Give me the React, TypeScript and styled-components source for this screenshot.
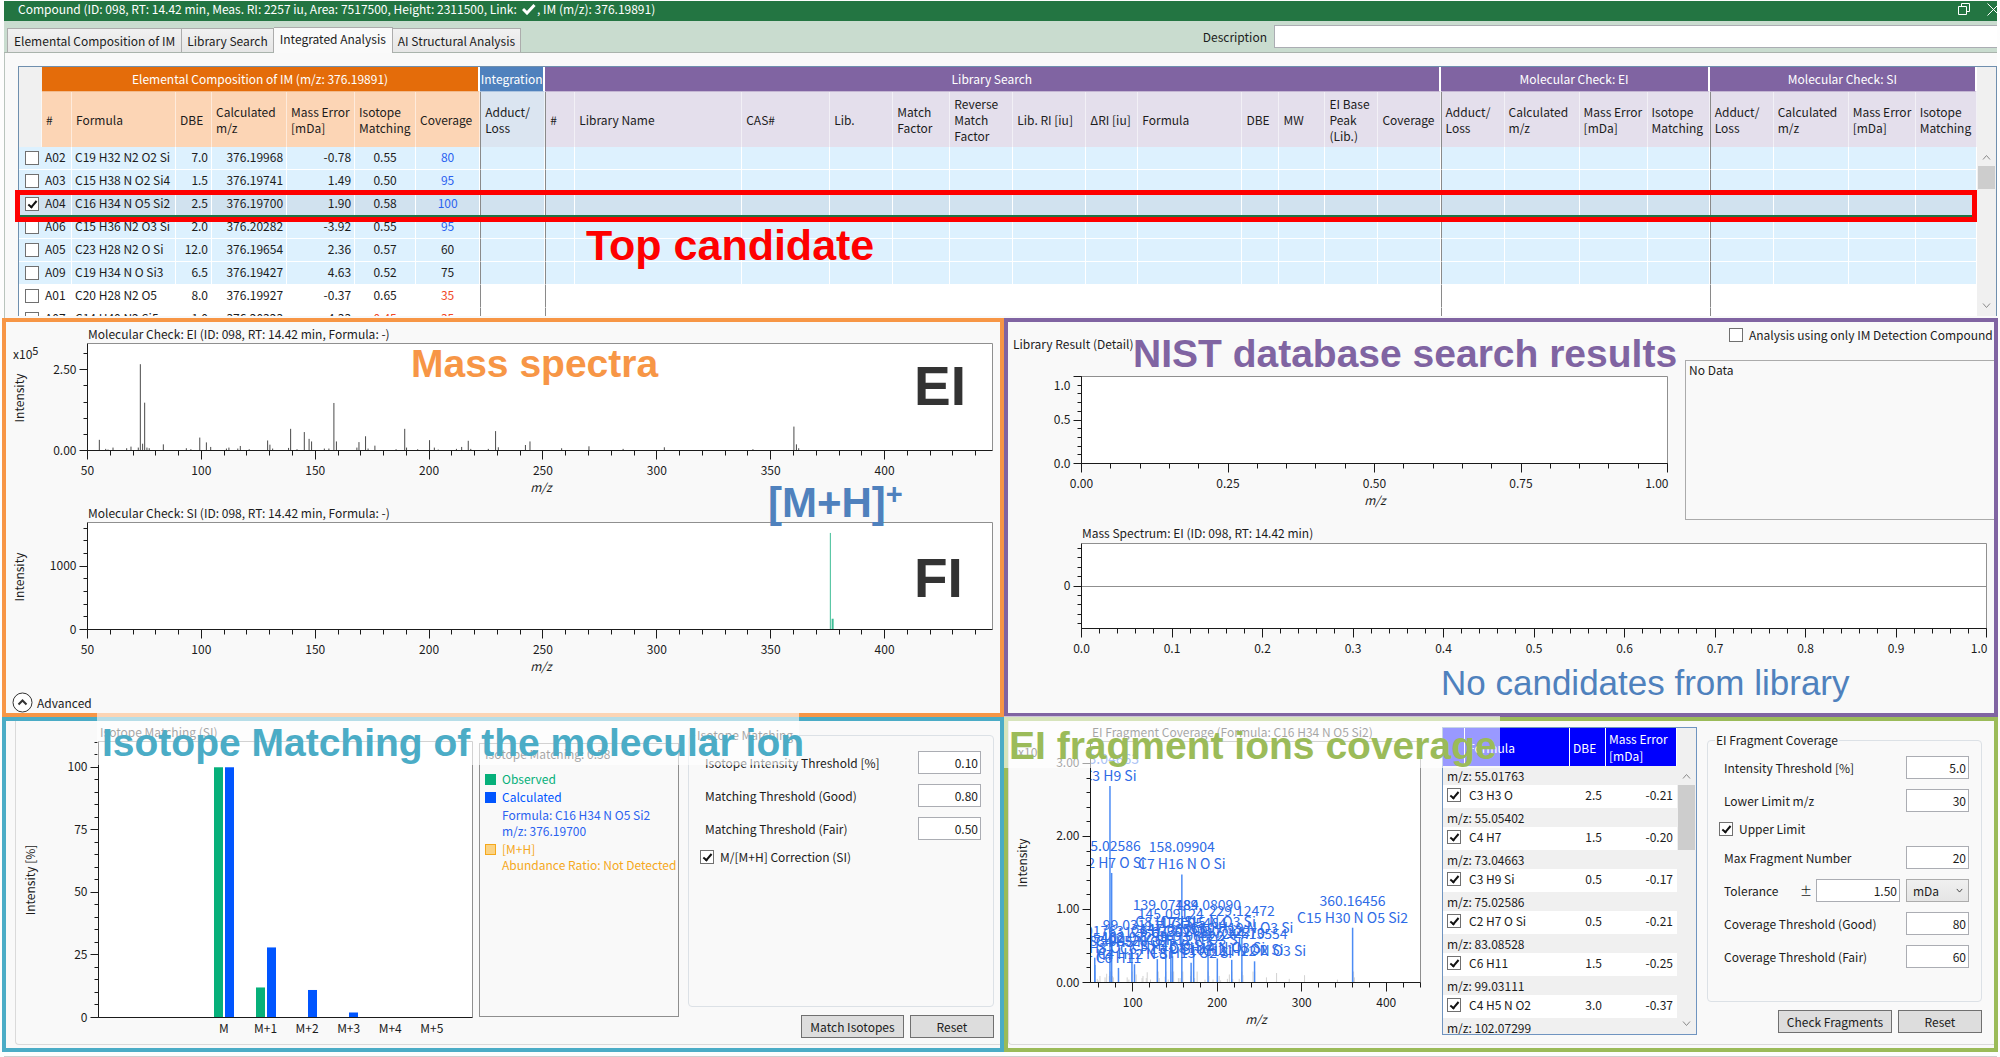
import React from 'react';
import styled, { createGlobalStyle, css } from 'styled-components';

const UI_FONT = '"Noto Sans CJK JP", "Noto Sans", sans-serif';
const NOTE_FONT = '"Liberation Sans", Arial, sans-serif';

const GlobalStyle = createGlobalStyle`
  *, *::before, *::after { box-sizing: border-box; }
  body { margin: 0; background: #fdfdfd; color: #1c1c1c; font: 12px/16px ${UI_FONT}; }
  button, input, select { font: inherit; color: inherit; margin: 0; }
`;

/* ---------- window chrome ---------- */

const Window = styled.div`
  padding: 1px 3px 0 4px;
`;

const TitleBar = styled.header`
  display: flex;
  align-items: center;
  height: 20px;
  padding: 0 0 4px 14px;
  background: #237542;
  color: #fff;
  overflow: hidden;
`;

const TitleText = styled.h1`
  display: flex;
  align-items: center;
  margin: 0 auto 0 0;
  font: inherit;
  white-space: pre;
  svg { margin: 0 1px 0 5px; }
`;

const CaptionButton = styled.button`
  display: grid;
  place-items: center;
  width: 30px;
  height: 16px;
  padding: 0;
  border: 0;
  background: none;
  color: #fff;
  &:last-child { width: 18px; justify-content: end; }
`;

const TabStrip = styled.div`
  display: flex;
  align-items: flex-end;
  height: 32px;
  padding-left: 3px;
  background: #c9dccf;
  border-bottom: 1px solid #a9b3ac;
`;

const TabList = styled.div`
  display: flex;
  align-items: flex-end;
`;

const Tab = styled.button<{ $active?: boolean }>`
  height: 24px;
  padding: 0 5px;
  border: 1px solid #acacac;
  border-left-width: 0;
  border-bottom: 0;
  background: linear-gradient(#f1f1f1, #e6e6e6);
  white-space: nowrap;
  &:first-child { padding: 0 6px; border-left-width: 1px; }
  ${p => p.$active && css`
    height: 26px;
    padding: 0 6px 4px;
    margin-bottom: -1px;
    background: #fafafa;
  `}
`;

const Description = styled.label`
  display: flex;
  align-items: center;
  gap: 7px;
  margin: 0 0 4px auto;
`;

const DescriptionInput = styled.input`
  width: calc(36vw + 3px);
  height: 23px;
  border: 1px solid #abadb3;
  border-right: 0;
  background: #fff;
`;

/* ---------- candidate grid ---------- */

const GridArea = styled.section`
  padding: 13px 0 2px 13px;
  border-left: 1px solid #b9c4bd;
  background: #f9f9f9;
`;

const GridWrap = styled.div`
  position: relative;
`;

const GridClip = styled.div`
  display: flex;
  height: 250px;
  overflow: hidden;
  border: solid #6f8fae;
  border-width: 1px 1px 0 1px;
  background: #fff;
`;

const CandidateTable = styled.table`
  flex: 1;
  width: 100%;
  height: max-content;
  table-layout: fixed;
  border-collapse: separate;
  border-spacing: 0;
`;

const tones = {
  none: ['#f0f0f0', '#f0f0f0'],
  orange: ['#e46c0a', '#fcd5b5'],
  blue: ['#4f81bd', '#dbe5f1'],
  purple: ['#8064a2', '#e4dfec'],
} as const;
type Tone = keyof typeof tones;

const GroupTh = styled.th<{ $tone: Tone }>`
  height: 25px;
  padding: 0;
  border-right: 2px solid #fff;
  border-bottom: 1px solid #fff8;
  background: ${p => tones[p.$tone][0]};
  color: #fff;
  font-weight: 400;
  white-space: nowrap;
  ${p => p.$tone === 'none' && css`border-color: #f0f0f0; border-right-width: 0;`}
`;

const ColumnTh = styled.th<{ $tone: Tone; $first?: boolean }>`
  height: 55px;
  padding: 0 0 0 4px;
  border-right: 1px solid #fff8;
  background: ${p => tones[p.$tone][1]};
  font-weight: 400;
  text-align: left;
  line-height: 16px;
  white-space: pre;
  ${p => p.$first && css`border-left: 1px solid #8a8a8a;`}
`;

const Row = styled.tr<{ $state: string }>`
  background: ${p => (p.$state === 'selected' ? '#d1e2ef' : p.$state === 'hit' ? '#ddf1fe' : '#fff')};
`;

const Cell = styled.td<{ $align?: string; $first?: boolean; $color?: string }>`
  height: 23px;
  padding: 0 3px 2px;
  border: solid #fff;
  border-width: 0 1px 1px 0;
  text-align: ${p => p.$align || 'left'};
  color: ${p => p.$color || 'inherit'};
  line-height: 20px;
  white-space: nowrap;
  ${p => p.$first && css`border-left: 1px solid #8a8a8a;`}
`;

const CheckBox = styled.input.attrs({ type: 'checkbox' })`
  appearance: none;
  position: relative;
  display: block;
  flex: none;
  width: 14px;
  height: 14px;
  border: 1px solid #707070;
  background: #fff;
  &:checked::after {
    content: '';
    position: absolute;
    left: 4px;
    top: 1px;
    width: 5px;
    height: 9px;
    border: solid #111;
    border-width: 0 2px 2px 0;
    transform: rotate(40deg);
  }
`;

const CheckCell = styled(Cell)`
  padding: 0 0 0 6px;
  border-right: 0;
`;

const ScrollBar = styled.div<{ $top: number }>`
  display: flex;
  flex-direction: column;
  align-items: stretch;
  flex: none;
  width: 19px;
  padding: ${p => p.$top}px 1px 2px;
  background: #f0f0f0;
`;

const ScrollButton = styled.button`
  display: grid;
  place-items: center;
  height: 17px;
  padding: 0;
  border: 0;
  background: none;
  color: #8a8a8a;
`;

const ScrollThumb = styled.div<{ $h: number }>`
  height: ${p => p.$h}px;
  margin-bottom: auto;
  background: #cdcdcd;
`;

/* ---------- annotations drawn over the window ---------- */

const TopBox = styled.div`
  position: absolute;
  left: -3px;
  right: 20px;
  top: 124px;
  height: 32px;
  border: 5px solid #fe0000;
  box-shadow: inset 0 -2px 0 #217346;
  pointer-events: none;
`;

const Note = styled.div<{ $x: number; $y: number; $size: number; $color: string; $plain?: boolean }>`
  position: absolute;
  left: ${p => p.$x}px;
  top: ${p => p.$y}px;
  color: ${p => p.$color};
  font: ${p => (p.$plain ? 400 : 700)} ${p => p.$size}px/1 ${NOTE_FONT};
  white-space: nowrap;
  pointer-events: none;
  sup { font-size: 29px; line-height: 0; vertical-align: 13px; }
`;

const Banner = styled(Note)<{ $w: number }>`
  width: ${p => p.$w}px;
  height: 52px;
  padding: 10px 0 0 5px;
  background: #fff9;
`;

/* ---------- panels ---------- */

const Panels = styled.main`
  display: grid;
  grid-template-columns: 1002fr 994fr;
  grid-template-rows: 399px 335px;
  padding: 0 2px;
  height: 737px;
`;

const Panel = styled.section<{ $color: string }>`
  position: relative;
  min-width: 0;
  border: 4px solid ${p => p.$color};
  background: #f9f9f9;
`;

const ColumnPanel = styled(Panel)`
  display: flex;
  flex-direction: column;
`;

const Chart = styled.svg`
  display: block;
  width: 100%;
  height: auto;
  font: 12px ${UI_FONT};
  fill: #1c1c1c;
`;

const Expander = styled.button`
  display: flex;
  align-items: center;
  gap: 4px;
  margin: auto auto 0 6px;
  padding: 0;
  border: 0;
  background: none;
`;

const LibraryTop = styled.div`
  display: grid;
  grid-template-columns: minmax(0, 677fr) minmax(0, 309fr);
`;

const LibraryTitle = styled.h2`
  margin: 14px 0 0 5px;
  font: inherit;
  line-height: 16px;
`;

const CheckLabel = styled.label`
  display: flex;
  align-items: center;
  gap: 6px;
  height: 14px;
  white-space: nowrap;
`;

const OnlyImLabel = styled(CheckLabel)`
  margin: 6px 0 18px 44px;
`;

const NoData = styled.div`
  height: 160px;
  padding: 1px 3px;
  border: 1px solid #ababab;
  border-right: 0;
`;

const Frame = styled.div<{ $inset: number; $cols: string }>`
  display: grid;
  grid-template-columns: ${p => p.$cols};
  height: 324px;
  margin-left: ${p => p.$inset}px;
  border: solid #dadada;
  border-width: 0 0 1px 1px;
  border-radius: 0 0 0 4px;
`;

const LegendBox = styled.div`
  margin: 22px 0 27px;
  padding: 2px 0 0 5px;
  border: 1px solid #8f8f8f;
  overflow: hidden;
  white-space: nowrap;
`;

const LegendItem = styled.div<{ $color?: string; $gap?: number }>`
  display: grid;
  grid-template-columns: 11px auto;
  column-gap: 6px;
  align-items: center;
  margin-top: ${p => p.$gap || 0}px;
  color: ${p => p.$color};
  span:last-child { grid-column: 2; }
`;

const Swatch = styled.span<{ $fill: string }>`
  width: 11px;
  height: 11px;
  border: 1px solid currentColor;
  background: ${p => p.$fill};
`;

const Settings = styled.form<{ $top: number; $bottom: number; $side: string }>`
  display: flex;
  flex-direction: column;
  min-width: 0;
  margin: ${p => p.$side};
  padding: ${p => p.$top}px 0 ${p => p.$bottom}px;
`;

const Group = styled.fieldset`
  flex: 1;
  min-width: 0;
  margin: 0 0 8px;
  padding: 9px 12px 0 11px;
  border: 1px solid #dce1e6;
  border-radius: 4px;
`;

const Legend = styled.legend`
  margin-left: -4px;
  padding: 0 1px;
  line-height: 14px;
`;

const Fields = styled.div`
  display: flex;
  flex-direction: column;
  gap: 10px;
`;

const Field = styled.label`
  display: flex;
  align-items: center;
  height: 23px;
  padding-left: 5px;
`;

const FieldText = styled.span`
  margin-right: auto;
`;

const NumberInput = styled.input<{ $w?: number }>`
  width: ${p => p.$w || 63}px;
  height: 23px;
  padding: 0 2px;
  border: 1px solid #abadb3;
  background: #fff;
  text-align: right;
`;

const ToleranceRow = styled.div`
  display: flex;
  align-items: center;
  gap: 6px;
`;

const ToleranceField = styled(Field)`
  flex: 1;
  gap: 4px;
`;

const UnitWrap = styled.div`
  position: relative;
  width: 63px;
  svg { position: absolute; right: 6px; top: 8px; pointer-events: none; }
`;

const UnitSelect = styled.select`
  appearance: none;
  display: block;
  width: 100%;
  height: 23px;
  padding: 0 6px;
  border: 1px solid #acacac;
  border-radius: 0;
  background: linear-gradient(#f0f0f0, #e5e5e5);
`;

const Buttons = styled.div`
  display: flex;
  justify-content: flex-end;
  gap: 6px;
`;

const PushButton = styled.button<{ $w: number }>`
  width: ${p => p.$w}px;
  height: 23px;
  padding: 0;
  border: 1px solid #707070;
  background: #dddddd;
`;

const FragmentBox = styled.div`
  display: flex;
  height: 308px;
  margin-top: 6px;
  overflow: hidden;
  border: 1px solid #6f94c0;
`;

const FragmentTable = styled.table`
  flex: 1;
  height: max-content;
  table-layout: fixed;
  border-collapse: separate;
  border-spacing: 0;
`;

const FragmentTh = styled.th`
  height: 38px;
  padding: 0 0 0 3px;
  border-right: 1px solid #fff;
  background: #0000fe;
  color: #fff;
  font-weight: 400;
  text-align: left;
  line-height: 17px;
  white-space: pre;
`;

const MassCell = styled.td`
  height: 19px;
  padding: 0 0 0 4px;
  background: #f0f0f0;
  line-height: 18px;
`;

const FragmentCell = styled.td<{ $right?: boolean }>`
  height: 23px;
  padding: 0 4px 3px;
  background: #fff;
  text-align: ${p => (p.$right ? 'right' : 'left')};
  line-height: 20px;
  white-space: nowrap;
`;

const StatusLine = styled.footer`
  height: 3px;
  margin: 1px 3px 0 4px;
  border-top: 1px solid #cfcfcf;
`;

/* ---------- drawing helpers ---------- */

const Chevron = ({ up, size = 9, width = 1 }: { up?: boolean; size?: number; width?: number }) => (
  <svg width={size} height={size} viewBox="0 0 9 9" fill="none" stroke="currentColor" strokeWidth={width}>
    <path d={up ? 'M1 6.5 4.5 2.5 8 6.5' : 'M1 2.5 4.5 6.5 8 2.5'} />
  </svg>
);

const Scroll = ({ top, thumb }: { top: number; thumb: number }) => (
  <ScrollBar $top={top}>
    <ScrollButton aria-label="Scroll up"><Chevron up /></ScrollButton>
    <ScrollThumb $h={thumb} />
    <ScrollButton aria-label="Scroll down"><Chevron /></ScrollButton>
  </ScrollBar>
);

type Mark = { at: number; label: string; shift?: number };
type PlotProps = {
  box: [number, number, number, number];
  xd: [number, number];
  yd: [number, number];
  xMajor: Mark[];
  yMajor: Mark[];
  xMinor?: number;
  yMinor: number;
  clampLast?: boolean;
  xDrop?: number;
  children?: (x: (v: number) => number, y: (v: number) => number) => React.ReactNode;
};

const steps = (from: number, to: number, step: number) => {
  const out: number[] = [];
  for (let k = Math.ceil(from / step - 0.001); k * step <= to + step * 0.01; k++) out.push(k * step);
  return out;
};

const Plot = ({ box, xd, yd, xMajor, yMajor, xMinor, yMinor, clampLast, xDrop = 24, children }: PlotProps) => {
  const [l, t, r, b] = box;
  const x = (v: number) => l + ((v - xd[0]) / (xd[1] - xd[0])) * (r - l);
  const y = (v: number) => b - ((v - yd[0]) / (yd[1] - yd[0])) * (b - t);
  const px = (v: number) => Math.round(v - 0.5) + 0.5;
  return (
    <g>
      <rect x={l} y={t} width={r - l} height={b - t} fill="#fff" />
      <path d={`M${l} ${t}H${r}V${b}`} fill="none" stroke="#8f8f8f" />
      {children && children(x, y)}
      <g stroke="#1a1a1a">
        <path d={`M${l} ${t}V${b}H${r}`} fill="none" />
        {xMinor && steps(xd[0], xd[1], xMinor).map(v => <line key={v} x1={px(x(v))} x2={px(x(v))} y1={b} y2={b + 5} />)}
        {steps(yd[0], yd[1], yMinor).map(v => <line key={v} x1={l - 4} x2={l} y1={px(y(v))} y2={px(y(v))} />)}
        {xMinor && xMajor.map(m => <line key={m.at} x1={px(x(m.at))} x2={px(x(m.at))} y1={b} y2={b + 9} />)}
        {yMajor.map(m => <line key={m.at} x1={l - 8} x2={l} y1={px(y(m.at))} y2={px(y(m.at))} />)}
      </g>
      {xMajor.map((m, i) => {
        const last = clampLast && i === xMajor.length - 1;
        return <text key={m.at} x={x(m.at) + (last ? 1 : 0)} y={b + xDrop} textAnchor={last ? 'end' : 'middle'}>{m.label}</text>;
      })}
      {yMajor.map(m => <text key={m.at} x={l - 11} y={y(m.at) + 4 + (m.shift || 0)} textAnchor="end">{m.label}</text>)}
    </g>
  );
};

const UpText = ({ x, y, children }: { x: number; y: number; children: React.ReactNode }) => (
  <text transform={`translate(${x} ${y}) rotate(-90)`} textAnchor="middle">{children}</text>
);

const Power = ({ x, y }: { x: number; y: number }) => (
  <text x={x} y={y}>x10<tspan dy="-4" fontSize="11">5</tspan></text>
);

/* ---------- data ---------- */

const groups: { title: string; tone: Tone; cols: [string, number][] }[] = [
  { title: 'Elemental Composition of IM (m/z: 376.19891)', tone: 'orange', cols: [['#', 30], ['Formula', 104], ['DBE', 36], ['Calculated\nm/z', 75], ['Mass Error\n[mDa]', 68], ['Isotope\nMatching', 61], ['Coverage', 64]] },
  { title: 'Integration', tone: 'blue', cols: [['Adduct/\nLoss', 65]] },
  { title: 'Library Search', tone: 'purple', cols: [['#', 30], ['Library Name', 167], ['CAS#', 88], ['Lib.', 63], ['Match\nFactor', 57], ['Reverse\nMatch\nFactor', 63], ['Lib. RI [iu]', 73], ['ΔRI [iu]', 52], ['Formula', 104], ['DBE', 37], ['MW', 46], ['EI Base\nPeak\n(Lib.)', 53], ['Coverage', 62]] },
  { title: 'Molecular Check: EI', tone: 'purple', cols: [['Adduct/\nLoss', 64], ['Calculated\nm/z', 75], ['Mass Error\n[mDa]', 68], ['Isotope\nMatching', 62]] },
  { title: 'Molecular Check: SI', tone: 'purple', cols: [['Adduct/\nLoss', 64], ['Calculated\nm/z', 75], ['Mass Error\n[mDa]', 67], ['Isotope\nMatching', 61]] },
];

const BLUE = '#2b62f0';
const RED = '#f04a28';

const candidates = [
  ['A02', 'C19 H32 N2 O2 Si', '7.0', '376.19968', '-0.78', '0.55', '80'],
  ['A03', 'C15 H38 N O2 Si4', '1.5', '376.19741', '1.49', '0.50', '95'],
  ['A04', 'C16 H34 N O5 Si2', '2.5', '376.19700', '1.90', '0.58', '100'],
  ['A06', 'C15 H36 N2 O3 Si', '2.0', '376.20282', '-3.92', '0.55', '95'],
  ['A05', 'C23 H28 N2 O Si', '12.0', '376.19654', '2.36', '0.57', '60'],
  ['A09', 'C19 H34 N O Si3', '6.5', '376.19427', '4.63', '0.52', '75'],
  ['A01', 'C20 H28 N2 O5', '8.0', '376.19927', '-0.37', '0.65', '35'],
  ['A07', 'C14 H40 N2 Si5', '1.0', '376.20323', '-4.33', '0.45', '35'],
];
const aligns = ['left', 'left', 'right', 'right', 'right', 'center', 'center'];

const eiPeaks: [number, number][] = [
  [55.2, 0.33], [58, 0.05], [59, 0.03], [61.2, 0.09], [67.2, 0.07], [69.1, 0.12], [72.3, 0.09], [73.2, 2.67], [74.2, 0.21], [75.1, 1.48], [76.1, 0.09], [77.1, 0.07], [83.3, 0.19],
  [93.4, 0.07], [95.4, 0.04], [99.3, 0.4], [102.2, 0.25], [104.1, 0.11], [111, 0.06], [112.1, 0.09], [116, 0.06], [117.1, 0.14], [121, 0.04], [129.1, 0.31], [130.1, 0.18], [131.3, 0.06], [138.3, 0.08], [139.2, 0.67], [142, 0.04],
  [145.2, 0.57], [147.3, 0.36], [148.4, 0.28], [154, 0.06], [156, 0.06], [158.2, 1.47], [159.3, 0.28], [168.3, 0.09], [169.2, 0.26], [172.1, 0.44], [173.2, 0.06], [176.2, 0.15], [185.5, 0.04], [189.3, 0.67], [190.1, 0.09],
  [195, 0.04], [200.2, 0.32], [202.3, 0.09], [204, 0.03], [212, 0.05], [214.3, 0.11], [217.2, 0.3], [218.3, 0.05], [226, 0.05], [229.2, 0.6], [230.4, 0.1], [242.3, 0.17], [244.3, 0.28], [258.2, 0.07],
  [270.2, 0.13], [285.2, 0.05], [303.3, 0.1], [342.2, 0.04], [360.2, 0.74], [361.3, 0.19], [362.3, 0.07],
];

const coverage: [string, string, number][] = [
  ['55.01763', 'C3 H3 O', 0.34], ['55.05402', 'C4 H7', 0.24], ['73.04663', 'C3 H9 Si', 2.69], ['75.02586', 'C2 H7 O Si', 1.5], ['83.08528', 'C6 H11', 0.2],
  ['99.03111', 'C4 H5 N O2', 0.42], ['102.07299', 'C4 H12 N Si', 0.25], ['129.07302', 'C6 H13 O Si', 0.32], ['139.07484', 'C8 H13 Si', 0.69], ['145.09124', 'C6 H13 N O3', 0.57],
  ['147.06553', 'C5 H15 O Si2', 0.36], ['158.09904', 'C7 H16 N O Si', 1.48], ['169.06822', 'C8 H13 O2 Si', 0.27], ['172.05464', 'C6 H12 N O3 Si', 0.44], ['189.08090', 'C7 H15 N O3 Si', 0.69],
  ['200.07322', 'C8 H14 N O3 Si', 0.33], ['217.12570', 'C10 H21 N O2 Si', 0.31], ['229.12472', 'C10 H19 N O3 Si', 0.61], ['244.13554', 'C11 H22 N O3 Si', 0.29], ['360.16456', 'C15 H30 N O5 Si2', 0.75],
];

const fragments = [
  ['55.01763', 'C3 H3 O', '2.5', '-0.21'],
  ['55.05402', 'C4 H7', '1.5', '-0.20'],
  ['73.04663', 'C3 H9 Si', '0.5', '-0.17'],
  ['75.02586', 'C2 H7 O Si', '0.5', '-0.21'],
  ['83.08528', 'C6 H11', '1.5', '-0.25'],
  ['99.03111', 'C4 H5 N O2', '3.0', '-0.37'],
  ['102.07299', '', '', ''],
];

const mzMarks = [50, 100, 150, 200, 250, 300, 350, 400].map(v => ({ at: v, label: String(v) }));

/* ---------- sections ---------- */

const Candidates = () => (
  <GridArea>
    <GridWrap>
      <GridClip>
        <CandidateTable>
          <colgroup>
            <col style={{ width: 23 }} />
            {groups.flatMap((g, gi) => g.cols.map(([, w], i) => <col key={gi + '-' + i} style={{ width: w }} />))}
          </colgroup>
          <thead>
            <tr>
              <GroupTh $tone="none" />
              {groups.map(g => <GroupTh key={g.title} $tone={g.tone} colSpan={g.cols.length}>{g.title}</GroupTh>)}
            </tr>
            <tr>
              <ColumnTh $tone="none" />
              {groups.map((g, gi) => g.cols.map(([label], i) => (
                <ColumnTh key={gi + '-' + i} $tone={g.tone} $first={gi > 0 && i === 0}>{label}</ColumnTh>
              )))}
            </tr>
          </thead>
          <tbody>
            {candidates.map((c, ri) => (
              <Row key={c[0]} $state={ri === 2 ? 'selected' : ri < 6 ? 'hit' : 'plain'}>
                <CheckCell><CheckBox defaultChecked={ri === 2} aria-label={c[0]} /></CheckCell>
                {c.map((v, i) => {
                  const color = i === 6 ? (+v >= 80 ? BLUE : +v < 50 ? RED : undefined) : i === 5 && +v < 0.5 ? RED : undefined;
                  return <Cell key={i} $align={aligns[i]} $color={color}>{v}</Cell>;
                })}
                {groups.slice(1).map((g, gi) => g.cols.map((_, i) => <Cell key={gi + '-' + i} $first={i === 0} />))}
              </Row>
            ))}
          </tbody>
        </CandidateTable>
        <Scroll top={82} thumb={23} />
      </GridClip>
      <TopBox />
      <Note $x={568} $y={158} $size={43} $color="#fe0000">Top candidate</Note>
    </GridWrap>
  </GridArea>
);

const Spectra = () => (
  <ColumnPanel $color="#f79646">
    <Chart viewBox="0 0 994 179">
      <text x="82" y="17">Molecular Check: EI (ID: 098, RT: 14.42 min, Formula: -)</text>
      <Power x={7} y={37} />
      <UpText x={18} y={76}>Intensity</UpText>
      <Plot box={[81.5, 21.5, 986.5, 128.5]} xd={[50, 447.4]} yd={[0, 3.31]} xMajor={mzMarks} xMinor={10}
        yMajor={[{ at: 0, label: '0.00' }, { at: 2.5, label: '2.50' }]} yMinor={0.5}>
        {(x, y) => <g stroke="#4a4a4a">{eiPeaks.map(([m, v]) => <line key={m} x1={x(m)} x2={x(m)} y1={y(0)} y2={y(v)} />)}</g>}
      </Plot>
      <text x="535" y="170" textAnchor="middle" fontStyle="italic">m/z</text>
    </Chart>
    <Chart viewBox="0 0 994 179">
      <text x="82" y="17">Molecular Check: SI (ID: 098, RT: 14.42 min, Formula: -)</text>
      <UpText x={18} y={76}>Intensity</UpText>
      <Plot box={[81.5, 21.5, 986.5, 128.5]} xd={[50, 447.4]} yd={[0, 1690]} xMajor={mzMarks} xMinor={10}
        yMajor={[{ at: 0, label: '0' }, { at: 1000, label: '1000' }]} yMinor={200}>
        {(x, y) => (
          <g stroke="#3fbd96">
            <line x1={x(376.2)} x2={x(376.2)} y1={y(0)} y2={y(1525)} />
            <line x1={x(377.2)} x2={x(377.2)} y1={y(0)} y2={y(170)} strokeWidth="2" />
          </g>
        )}
      </Plot>
      <text x="535" y="170" textAnchor="middle" fontStyle="italic">m/z</text>
    </Chart>
    <Expander>
      <svg width="21" height="21" viewBox="0 0 21 21" fill="none" stroke="#333">
        <circle cx="10.5" cy="10.5" r="9.5" fill="#fff" />
        <path d="M6.5 12.5 10.5 8.5 14.5 12.5" strokeWidth="2" />
      </svg>
      Advanced
    </Expander>
    <Note $x={405} $y={22} $size={39} $color="#f79646">Mass spectra</Note>
    <Note $x={908} $y={37} $size={55} $color="#333">EI</Note>
    <Note $x={762} $y={160} $size={42} $color="#4f81bd">[M+H]<sup>+</sup></Note>
    <Note $x={908} $y={229} $size={55} $color="#333">FI</Note>
  </ColumnPanel>
);

const Library = () => (
  <Panel $color="#8064a2">
    <LibraryTop>
      <div>
        <LibraryTitle>Library Result (Detail)</LibraryTitle>
        <Chart viewBox="0 0 677 160">
          <Plot box={[73.5, 24.5, 659.5, 111.5]} xd={[0, 1]} yd={[0, 1]} xMinor={0.05} yMinor={0.1} clampLast
            xMajor={[0, 0.25, 0.5, 0.75, 1].map(v => ({ at: v, label: v.toFixed(2) }))}
            yMajor={[{ at: 0, label: '0.0' }, { at: 0.5, label: '0.5' }, { at: 1, label: '1.0', shift: 9 }]} />
          <text x="367" y="153" textAnchor="middle" fontStyle="italic">m/z</text>
        </Chart>
      </div>
      <div>
        <OnlyImLabel><CheckBox />Analysis using only IM Detection Compound</OnlyImLabel>
        <NoData>No Data</NoData>
      </div>
    </LibraryTop>
    <Chart viewBox="0 0 986 150">
      <text x="74" y="18">Mass Spectrum: EI (ID: 098, RT: 14.42 min)</text>
      <Plot box={[73.5, 23.5, 978.5, 108.5]} xd={[0, 1]} yd={[-4.55, 4.55]} xMinor={0.02} yMinor={1} clampLast
        xMajor={[0, 1, 2, 3, 4, 5, 6, 7, 8, 9, 10].map(v => ({ at: v / 10, label: (v / 10).toFixed(1) }))}
        yMajor={[{ at: 0, label: '0' }]}>
        {() => <path d="M73.5 66.5H978.5" stroke="#8f8f8f" />}
      </Plot>
    </Chart>
    <Note $x={125} $y={12} $size={39} $color="#8064a2">NIST database search results</Note>
    <Note $x={433} $y={343} $size={35} $color="#4f81bd" $plain>No candidates from library</Note>
  </Panel>
);

const bars: [number, number, string][] = [
  [198, 100, '#06b07a'], [209, 100, '#0055ff'], [240, 12, '#06b07a'], [251, 28, '#0055ff'], [292, 11, '#0055ff'], [333, 2, '#0055ff'],
];

const NumberField = ({ label, value }: { label: string; value: string }) => (
  <Field><FieldText>{label}</FieldText><NumberInput defaultValue={value} /></Field>
);

const Isotopes = () => (
  <Panel $color="#4bacc6">
    <Frame $inset={9} $cols="minmax(0, 1fr) 200px 321px">
      <Chart viewBox="0 0 463 323">
        <text x="84" y="16">Isotope Matching (SI)</text>
        <UpText x={19} y={159}>Intensity [%]</UpText>
        <Plot box={[82.5, 20.5, 456.5, 296.5]} xd={[-3.02, 5.98]} yd={[0, 110.3]} yMinor={5} xDrop={15}
          xMajor={['M', 'M+1', 'M+2', 'M+3', 'M+4', 'M+5'].map((label, at) => ({ at, label }))}
          yMajor={[0, 25, 50, 75, 100].map(v => ({ at: v, label: String(v) }))}>
          {(_, y) => bars.map(([x, v, fill]) => <rect key={x} x={x} y={y(v)} width="9" height={y(0) - y(v)} fill={fill} />)}
        </Plot>
      </Chart>
      <LegendBox>
        <div>Isotope Matching: 0.58</div>
        <LegendItem $color="#06b07a" $gap={9}><Swatch $fill="#06b07a" /><span>Observed</span></LegendItem>
        <LegendItem $color="#0055ff" $gap={2}><Swatch $fill="#0055ff" /><span>Calculated</span></LegendItem>
        <LegendItem $color="#2b62f0" $gap={2}><span>Formula: C16 H34 N O5 Si2</span></LegendItem>
        <LegendItem $color="#2b62f0"><span>m/z: 376.19700</span></LegendItem>
        <LegendItem $color="#f5a81c" $gap={2}><Swatch $fill="#fbd384" /><span>[M+H]</span></LegendItem>
        <LegendItem $color="#f5a81c"><span>Abundance Ratio: Not Detected</span></LegendItem>
      </LegendBox>
      <Settings $top={7} $bottom={6} $side="0 6px 0 9px" onSubmit={e => e.preventDefault()}>
        <Group>
          <Legend>Isotope Matching</Legend>
          <Fields>
            <NumberField label="Isotope Intensity Threshold [%]" value="0.10" />
            <NumberField label="Matching Threshold (Good)" value="0.80" />
            <NumberField label="Matching Threshold (Fair)" value="0.50" />
            <CheckLabel><CheckBox defaultChecked />M/[M+H] Correction (SI)</CheckLabel>
          </Fields>
        </Group>
        <Buttons>
          <PushButton $w={103} type="button">Match Isotopes</PushButton>
          <PushButton $w={84} type="button">Reset</PushButton>
        </Buttons>
      </Settings>
    </Frame>
    <Banner $x={91} $y={-8} $size={39} $w={702} $color="#4bacc6">Isotope Matching of the molecular ion</Banner>
  </Panel>
);

const Fragments = () => (
  <Panel $color="#9bbb59">
    <Frame $inset={0} $cols="minmax(0, 1fr) 255px 297px">
      <Chart viewBox="0 0 433 323">
        <text x="83" y="16">EI Fragment Coverage (Formula: C16 H34 N O5 Si2)</text>
        <Power x={9} y={36} />
        <UpText x={18} y={142}>Intensity</UpText>
        <clipPath id="plot-area"><rect x="82" y="21" width="330" height="240" /></clipPath>
        <Plot box={[81.5, 20.5, 411.5, 261.5]} xd={[50, 440.5]} yd={[0, 3.3]} xMinor={20} yMinor={0.2}
          xMajor={[100, 200, 300, 400].map(v => ({ at: v, label: String(v) }))}
          yMajor={[0, 1, 2, 3].map(v => ({ at: v, label: v.toFixed(2) }))}>
          {(x, y) => (
            <g clipPath="url(#plot-area)">
              <g stroke="#d2d2d2">{eiPeaks.map(([m, v]) => <line key={m} x1={x(m)} x2={x(m)} y1={y(0)} y2={y(Math.min(v, 0.15))} />)}</g>
              <g stroke="#4c8cf5" strokeWidth="1.5">{coverage.map(([m, , v]) => <line key={m} x1={x(+m)} x2={x(+m)} y1={y(0)} y2={y(v)} />)}</g>
              <g fill="#2e6be6" fontSize="14" textAnchor="middle">
                {coverage.map(([m, f, v]) => (
                  <React.Fragment key={m}>
                    <text x={x(+m)} y={y(v) - 22}>{m}</text>
                    <text x={x(+m)} y={y(v) - 5}>{f}</text>
                  </React.Fragment>
                ))}
              </g>
            </g>
          )}
        </Plot>
        <text x="247" y="303" textAnchor="middle" fontStyle="italic">m/z</text>
      </Chart>
      <FragmentBox>
        <FragmentTable>
          <colgroup>
            <col style={{ width: 22 }} /><col style={{ width: 105 }} /><col style={{ width: 36 }} /><col style={{ width: 71 }} />
          </colgroup>
          <thead>
            <tr><FragmentTh /><FragmentTh>Formula</FragmentTh><FragmentTh>DBE</FragmentTh><FragmentTh>{'Mass Error\n[mDa]'}</FragmentTh></tr>
          </thead>
          <tbody>
            {fragments.map(([m, f, d, e]) => (
              <React.Fragment key={m}>
                <tr><MassCell colSpan={4}>m/z: {m}</MassCell></tr>
                {f && (
                  <tr>
                    <FragmentCell><CheckBox defaultChecked aria-label={f} /></FragmentCell>
                    <FragmentCell>{f}</FragmentCell>
                    <FragmentCell $right>{d}</FragmentCell>
                    <FragmentCell $right>{e}</FragmentCell>
                  </tr>
                )}
              </React.Fragment>
            ))}
          </tbody>
        </FragmentTable>
        <Scroll top={40} thumb={65} />
      </FragmentBox>
      <Settings $top={12} $bottom={11} $side="0 12px 0 10px" onSubmit={e => e.preventDefault()}>
        <Group>
          <Legend>EI Fragment Coverage</Legend>
          <Fields>
            <NumberField label="Intensity Threshold [%]" value="5.0" />
            <NumberField label="Lower Limit m/z" value="30" />
            <CheckLabel><CheckBox defaultChecked />Upper Limit</CheckLabel>
            <NumberField label="Max Fragment Number" value="20" />
            <ToleranceRow>
              <ToleranceField><FieldText>Tolerance</FieldText>±<NumberInput $w={84} defaultValue="1.50" /></ToleranceField>
              <UnitWrap>
                <UnitSelect aria-label="Tolerance unit" defaultValue="mDa"><option>mDa</option></UnitSelect>
                <Chevron size={7} />
              </UnitWrap>
            </ToleranceRow>
            <NumberField label="Coverage Threshold (Good)" value="80" />
            <NumberField label="Coverage Threshold (Fair)" value="60" />
          </Fields>
        </Group>
        <Buttons>
          <PushButton $w={114} type="button">Check Fragments</PushButton>
          <PushButton $w={84} type="button">Reset</PushButton>
        </Buttons>
      </Settings>
    </Frame>
    <Banner $x={-4} $y={-5} $size={39} $w={496} $color="#9bbb59">EI fragment ions coverage</Banner>
  </Panel>
);

export default function App() {
  return (
    <>
      <GlobalStyle />
      <Window>
        <TitleBar>
          <TitleText>
            Compound (ID: 098, RT: 14.42 min, Meas. RI: 2257 iu, Area: 7517500, Height: 2311500, Link:
            <svg width="14" height="12" viewBox="0 0 14 12" fill="none" stroke="#fff" strokeWidth="3"><path d="M1 6 5 10 12.5 2" /></svg>
            , IM (m/z): 376.19891)
          </TitleText>
          <CaptionButton aria-label="Restore">
            <svg width="14" height="14" viewBox="0 0 14 14" fill="none" stroke="currentColor"><path d="M4.5 4V1.5H12.5V9.5H10M1.5 4.5H9.5V12.5H1.5Z" /></svg>
          </CaptionButton>
          <CaptionButton aria-label="Close">
            <svg width="10" height="13" viewBox="0 0 10 13" fill="none" stroke="currentColor"><path d="M.5.5 12.5 12.5M.5 12.5 12.5.5" /></svg>
          </CaptionButton>
        </TitleBar>
        <TabStrip>
          <TabList role="tablist">
            <Tab role="tab">Elemental Composition of IM</Tab>
            <Tab role="tab">Library Search</Tab>
            <Tab role="tab" aria-selected $active>Integrated Analysis</Tab>
            <Tab role="tab">AI Structural Analysis</Tab>
          </TabList>
          <Description>Description<DescriptionInput /></Description>
        </TabStrip>
        <Candidates />
      </Window>
      <Panels>
        <Spectra />
        <Library />
        <Isotopes />
        <Fragments />
      </Panels>
      <StatusLine />
    </>
  );
}
